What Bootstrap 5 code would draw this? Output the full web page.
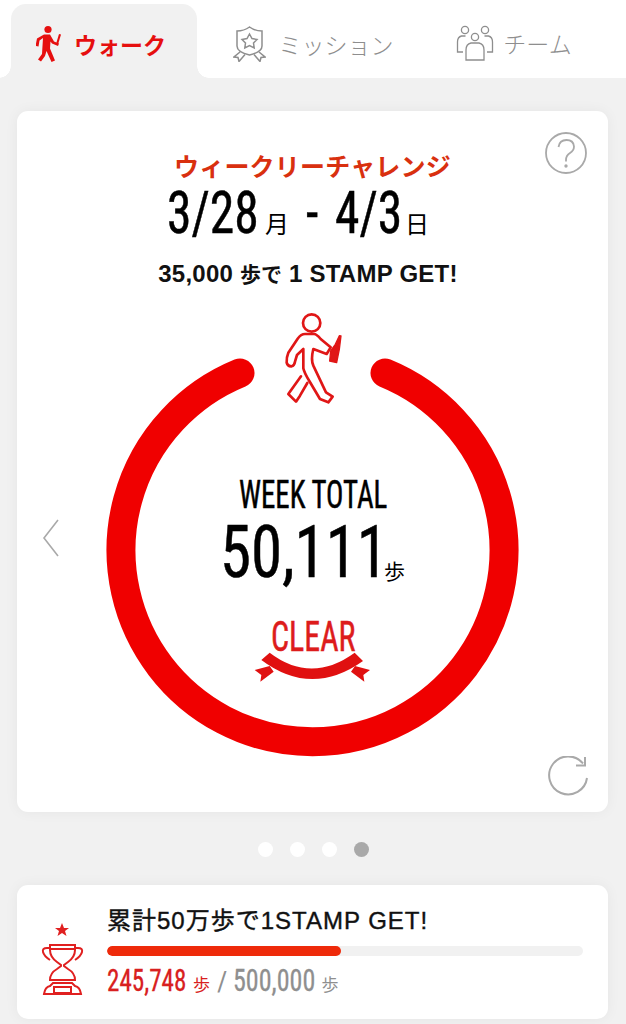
<!DOCTYPE html>
<html lang="ja">
<head>
<meta charset="UTF-8">
<title>ウォーク</title>
<link href="https://cdn.jsdelivr.net/npm/bootstrap@5.3.0/dist/css/bootstrap.min.css" rel="stylesheet">
<style>
body { background: #f1f1f1; font-family: "Liberation Sans", "Noto Sans CJK JP", sans-serif; width: 626px; height: 1024px; overflow: hidden; }
.cond { font-family: "Liberation Sans Narrow", "Roboto Condensed", "Liberation Sans", sans-serif; }
.jp { font-family: "Noto Sans CJK JP", sans-serif; }
.sq { display: inline-block; white-space: nowrap; transform-origin: left center; text-align: left; -webkit-text-stroke: .5px currentColor; }
.tabbar { height: 78px; background: #fff; }
.tab-item { height: 74px; margin-top: 4px; font-size: 23px; color: #8e8e8e; padding-top: 6px; }
.tab-walk { width: 186px; margin-left: 11px; background: #f1f1f1; border-radius: 15px 15px 0 0; color: #e60f0f; font-weight: 700; gap: 12px; padding-right: 6px; }
.tab-walk::before, .tab-walk::after { content: ""; position: absolute; bottom: 0; width: 12px; height: 12px; }
.tab-walk::before { left: -12px; background: radial-gradient(circle at 0 0, #fff 11.5px, #f1f1f1 12px); }
.tab-walk::after { right: -12px; background: radial-gradient(circle at 100% 0, #fff 11.5px, #f1f1f1 12px); }
.tab-mission { width: 228px; padding-left: 4px; gap: 13px; font-weight: 300; }
.tab-team { width: 178px; gap: 9px; font-weight: 300; padding-bottom: 2px; }
.panel { margin: 0 18px 0 17px; background: #fff; border-radius: 11px; box-shadow: 0 0 14px rgba(0,0,0,.05); }
.panel-main { height: 701px; margin-top: 33px; }
.week-title { padding-top: 37px; font-size: 25px; line-height: 34px; font-weight: 700; color: #d9300f; letter-spacing: .2px; }
.week-date { height: 60px; line-height: 60px; color: #000; padding-right: 29px; margin-top: 1px; }
.week-date .num { font-size: 59px; transform: scaleX(.84); }
.week-date .unit { font-size: 24px; width: 24px; margin: 0 17px 0 8px; }
.week-date .unit-end { margin: 0 0 0 6px; }
.w-a { width: 90px; }
.w-b { width: 10px; margin-right: 19px; }
.w-c { width: 64px; }
.week-goal { height: 28px; font-size: 24px; line-height: 28px; font-weight: 700; color: #111; margin-top: 17px; padding-right: 9px; letter-spacing: .25px; }
.week-goal span { font-size: 21px; line-height: 1; letter-spacing: 0; }
.ring-box { width: 426px; height: 450px; margin: 21px auto 0; }
.ring-text { top: 164px; left: 0; right: 0; }
.total-label { font-size: 39px; line-height: 44px; color: #000; width: 148px; transform: scaleX(.74); }
.total-num { line-height: 72px; color: #000; padding-right: 0; }
.total-num .sq { font-size: 72px; width: 159px; transform: scaleX(.875); }
.total-num .unit { font-size: 21px; line-height: 24px; margin: 0 0 7px 5px; }
.clear-word { font-size: 42px; line-height: 30px; color: #dd1c1c; margin-top: 33px; width: 84px; transform: scaleX(.76); }
.ribbon { margin-top: -2px; }
.ic-help { top: 21px; right: 21px; }
.ic-reload { bottom: 14px; right: 18px; }
.ic-prev { left: 25px; top: 408px; }
.pager { height: 73px; padding-top: 2px; gap: 17px; }
.pager i { width: 15px; height: 15px; background: #fff; border-radius: 50%; display: block; }
.pager i.on { background: #a9a9a9; }
.panel-total { height: 134px; }
.total-icon { width: 90px; padding-top: 38px; padding-left: 24px; }
.total-head { font-size: 24px; line-height: 30px; color: #111; padding-top: 21px; letter-spacing: 1px; -webkit-text-stroke: .4px currentColor; }
.total-bar { height: 10px; background: #f1f1f1; width: 476px; margin-top: 10px; border-radius: 5px; }
.total-bar .progress-bar { background: #ee2a0a; border-radius: 5px; }
.total-count { line-height: 38px; margin-top: 6px; color: #8f8f8f; }
.total-count .sq { font-size: 31px; transform: scaleX(.81); -webkit-text-stroke: .3px currentColor; }
.total-count .unit { font-size: 17px; width: 18px; }
.total-count .done { color: #d82020; }
.n-a { width: 79px; margin-right: 7px; }
.n-s { font-size: 28px; margin: 0 6px; }
.total-count .n-b { width: 82px; margin-right: 6px; transform: scaleX(.84); }
</style>
</head>
<body>
<div class="tabbar d-flex">
  <div class="tab-item tab-walk position-relative d-flex align-items-center justify-content-center jp">
    <svg width="26" height="38" viewBox="0 0 26 38" fill="#e60f0f"><circle cx="12" cy="4.5" r="3.6"/><path d="M8 9.500h6l4 7 5 2-1 2.500-6-2.500-1.500-2-.5 7 5 12-3.500 1.500-5-11-1.500 5-4 5.500-3-2 4-5.500 1-16-3.500 2.500-1 6-3-.5 1.500-7.500z"/><path d="M23 9l2 .5-3 10-2-.5z"/></svg>
    <span>ウォーク</span>
  </div>
  <div class="tab-item tab-mission d-flex align-items-center justify-content-center jp">
    <svg width="33" height="36" viewBox="0 0 33 36" fill="none" stroke="#8e8e8e" stroke-width="1.500"><path d="M4 5q7 0 12.500-4Q22 5 29 5v15q0 6-12.500 9Q4 26 4 20z"/><path d="M16.500 8l2.500 4.500 5 1-3.500 3.500.7 5-4.700-2.300-4.700 2.300.7-5L9 13.500l5-1z"/><path d="M7 26l-6 5 4 .5 1 4 6-7M26 26l6 5-4 .5-1 4-6-7"/></svg>
    <span>ミッション</span>
  </div>
  <div class="tab-item tab-team d-flex align-items-center justify-content-center jp">
    <svg width="38" height="36" viewBox="0 0 38 36" fill="none" stroke="#8e8e8e" stroke-width="1.300"><circle cx="9" cy="5" r="3.600"/><circle cx="29" cy="5" r="3.600"/><circle cx="19" cy="12" r="3.600"/><path d="M10 35V25q0-6 5-7h8q5 1 5 7v10z"/><path d="M7 27H1.500V17q0-5 4-6h4M31 27h5.500V17q0-5-4-6h-4"/></svg>
    <span>チーム</span>
  </div>
</div>

<div class="panel panel-main position-relative text-center">
  <svg class="ic-help position-absolute" width="42" height="42" viewBox="0 0 42 42" fill="none" stroke="#a9a9a9" stroke-width="1.800"><circle cx="21" cy="21" r="20"/><path d="M13.500 15q1-7 8-7t7.500 6.500q0 4-4 6.500t-4 7v1.500"/><circle cx="21" cy="34" r=".8"/></svg>
  <div class="week-title jp">ウィークリーチャレンジ</div>
  <div class="week-date cond d-flex justify-content-center align-items-baseline">
    <span class="sq num w-a">3/28</span><span class="unit jp">月</span><span class="sq num w-b">-</span><span class="sq num w-c">4/3</span><span class="unit unit-end jp">日</span>
  </div>
  <div class="week-goal">35,000 <span class="jp">歩で</span> 1 STAMP GET!</div>
  <div class="ring-box position-relative">
    <svg class="d-block" width="426" height="450" viewBox="100 310 426 450" fill="none">
      <path d="M385 374A191.500 191.500 0 1 1 240 374" stroke="#f00000" stroke-width="29" stroke-linecap="round"/>
      <g transform="translate(220 300) scale(.3333)" stroke="#e01616" stroke-width="8" stroke-linejoin="round" stroke-linecap="round">
        <circle cx="275" cy="72" r="26"/>
        <path d="M255 105q-12 0-22 14l-28 42q-6 14-5 30 3 12 15 11 8-2 10-14l6-20 19-18v58q3 14 18 38l32 54 25 10 13-17-20-13-38-80q-8-18 0-50l40 15 12-20-30-25q-12-15-20-15z"/>
        <path d="M243 232l-38 53 23 23 12-18 22-38"/>
        <path fill="#e01616" stroke-width="4" d="M358 110l-12 26-14 20-3 30 21 5 8-40 5-40z"/>
      </g>
    </svg>
    <div class="ring-text position-absolute d-flex flex-column align-items-center">
      <div class="sq total-label cond">WEEK TOTAL</div>
      <div class="total-num cond d-flex"><span class="sq">50,111</span><span class="unit jp align-self-end">歩</span></div>
      <div class="sq clear-word cond">CLEAR</div>
      <svg class="d-block ribbon" width="120" height="32" viewBox="160 570 360 96" fill="#e01010"><path d="M185 600l25-22q125 95 255 0l25 25q-155 110-305-3z"/><path d="M165 630l45-12 12 17-40 30 3-20zM511 630l-45-12-12 17 40 30-3-20z"/></svg>
    </div>
  </div>
  <svg class="ic-prev position-absolute" width="18" height="38" viewBox="0 0 18 38" fill="none" stroke="#a9a9a9" stroke-width="1.600"><path d="M16 1L2 19l14 18"/></svg>
  <svg class="ic-reload position-absolute" width="42" height="42" viewBox="0 0 42 42" fill="none" stroke="#a9a9a9" stroke-width="2"><path d="M39 22a19 19 0 1 1-4-14.500"/><path d="M37 1v8.500h-9"/></svg>
</div>

<div class="pager d-flex align-items-center justify-content-center"><i></i><i></i><i></i><i class="on"></i></div>

<div class="panel panel-total d-flex">
  <div class="total-icon">
    <svg class="d-block" width="44" height="72" viewBox="0 0 44 72" fill="none" stroke="#e02020" stroke-width="2"><path fill="#e02020" stroke="none" d="M21 0l2 5h5l-4 3 1.500 5-4.500-3-4.500 3 1.500-5-4-3h5z"/><path d="M9 22h25v5q0 7-7 12l-4 3v1l4 3q7 4 7 11H9q0-7 7-11l4-3v-1l-4-3q-7-5-7-12zM9 25H6q-5 0-4 4t7 8M34 25h3q5 0 4 4t-7 8"/><path d="M9 26h25M3 71q1-7 6-8l3-3h19l3 3q5 1 6 8zM13 64h17v6H13z"/></svg>
  </div>
  <div class="flex-grow-1">
    <div class="total-head">累計50万歩で1STAMP GET!</div>
    <div class="progress total-bar"><div class="progress-bar" style="width: 49.2%"></div></div>
    <div class="total-count cond d-flex align-items-baseline">
      <span class="sq done n-a">245,748</span><span class="unit done jp">歩</span><span class="n-s">/</span><span class="sq n-b">500,000</span><span class="unit jp">歩</span>
    </div>
  </div>
</div>
<script src="https://cdn.jsdelivr.net/npm/bootstrap@5.3.0/dist/js/bootstrap.bundle.min.js"></script>
</body>
</html>
